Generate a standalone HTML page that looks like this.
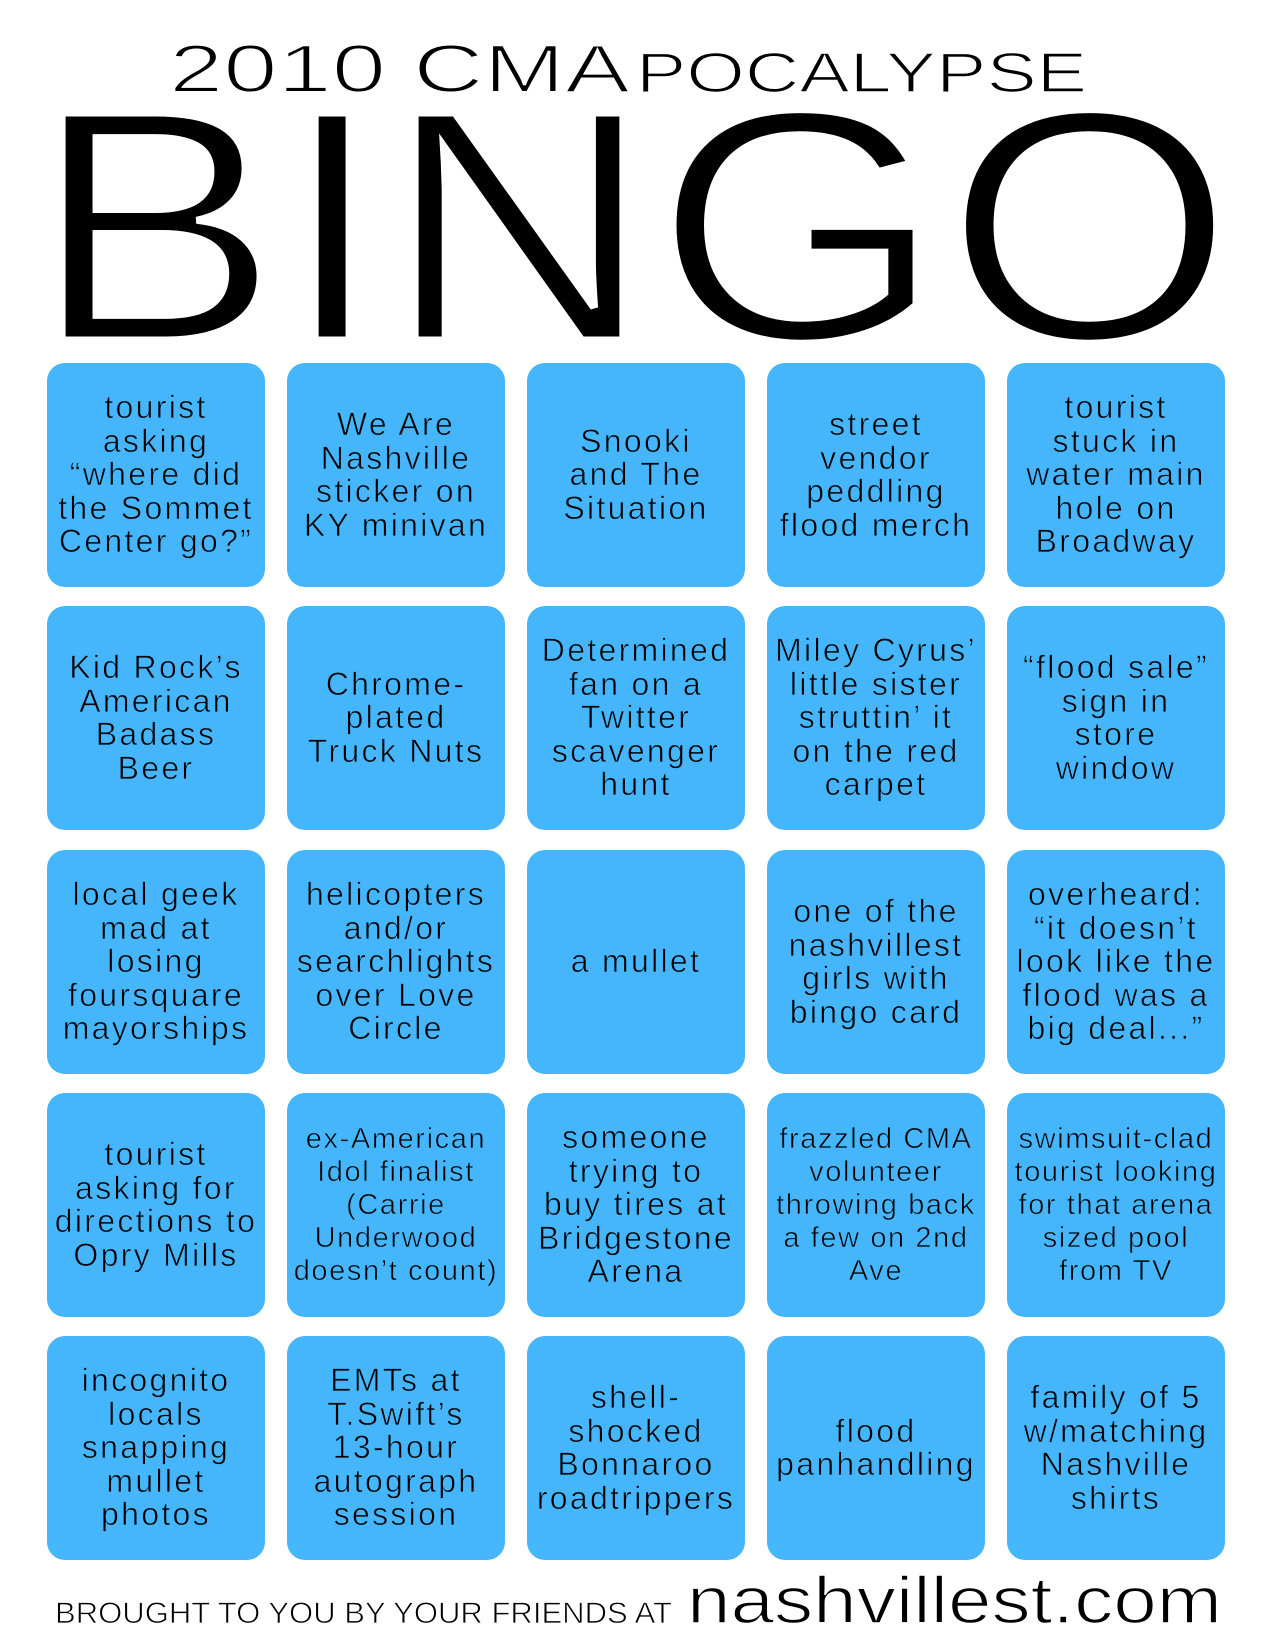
<!DOCTYPE html>
<html><head><meta charset="utf-8"><style>
body{margin:0;width:1275px;height:1650px;background:#fff;position:relative;overflow:hidden;font-family:"Liberation Sans",Arial,sans-serif;}
svg{position:absolute;left:0;top:0}
.c{position:absolute;width:218px;height:224px;background:#45b5fc;border-radius:18px;display:flex;align-items:center;justify-content:center;text-align:center;color:#000;font-size:32px;letter-spacing:2.3px;line-height:33.5px;white-space:nowrap;-webkit-text-stroke:0.7px #45b5fc}
.s{font-size:29px;letter-spacing:1.6px;line-height:33px}
</style></head><body>
<svg width="1275" height="1650">
<g font-family="Liberation Sans" stroke="#fff">
<text x="169" y="92" font-size="68" stroke-width="2" textLength="461" lengthAdjust="spacingAndGlyphs">2010 CMA</text>
<text x="636" y="92" font-size="57" stroke-width="1.6" textLength="451" lengthAdjust="spacingAndGlyphs">POCALYPSE</text>
<text x="31" y="340" font-size="330" stroke-width="7" textLength="1204" lengthAdjust="spacingAndGlyphs">BINGO</text>
<text x="55" y="1623" font-size="30" stroke-width="0.8" textLength="617" lengthAdjust="spacingAndGlyphs">BROUGHT TO YOU BY YOUR FRIENDS AT</text>
<text x="687" y="1623" font-size="66" stroke-width="1.5" textLength="535" lengthAdjust="spacingAndGlyphs">nashvillest.com</text>
</g>
</svg>

<div class="c" style="left:47px;top:363px">tourist<br>asking<br>“where did<br>the Sommet<br>Center go?”</div>
<div class="c" style="left:287px;top:363px">We Are<br>Nashville<br>sticker on<br>KY minivan</div>
<div class="c" style="left:527px;top:363px">Snooki<br>and The<br>Situation</div>
<div class="c" style="left:767px;top:363px">street<br>vendor<br>peddling<br>flood merch</div>
<div class="c" style="left:1007px;top:363px">tourist<br>stuck in<br>water main<br>hole on<br>Broadway</div>

<div class="c" style="left:47px;top:606px">Kid Rock’s<br>American<br>Badass<br>Beer</div>
<div class="c" style="left:287px;top:606px">Chrome-<br>plated<br>Truck Nuts</div>
<div class="c" style="left:527px;top:606px">Determined<br>fan on a<br>Twitter<br>scavenger<br>hunt</div>
<div class="c" style="left:767px;top:606px">Miley Cyrus’<br>little sister<br>struttin’ it<br>on the red<br>carpet</div>
<div class="c" style="left:1007px;top:606px">“flood sale”<br>sign in<br>store<br>window</div>

<div class="c" style="left:47px;top:850px">local geek<br>mad at<br>losing<br>foursquare<br>mayorships</div>
<div class="c" style="left:287px;top:850px">helicopters<br>and/or<br>searchlights<br>over Love<br>Circle</div>
<div class="c" style="left:527px;top:850px">a mullet</div>
<div class="c" style="left:767px;top:850px">one of the<br>nashvillest<br>girls with<br>bingo card</div>
<div class="c" style="left:1007px;top:850px">overheard:<br>“it doesn’t<br>look like the<br>flood was a<br>big deal...”</div>

<div class="c" style="left:47px;top:1093px">tourist<br>asking for<br>directions to<br>Opry Mills</div>
<div class="c s" style="left:287px;top:1093px">ex-American<br>Idol finalist<br>(Carrie<br>Underwood<br>doesn’t count)</div>
<div class="c" style="left:527px;top:1093px">someone<br>trying to<br>buy tires at<br>Bridgestone<br>Arena</div>
<div class="c s" style="left:767px;top:1093px">frazzled CMA<br>volunteer<br>throwing back<br>a few on 2nd<br>Ave</div>
<div class="c s" style="left:1007px;top:1093px">swimsuit-clad<br>tourist looking<br>for that arena<br>sized pool<br>from TV</div>

<div class="c" style="left:47px;top:1336px">incognito<br>locals<br>snapping<br>mullet<br>photos</div>
<div class="c" style="left:287px;top:1336px">EMTs at<br>T.Swift’s<br>13-hour<br>autograph<br>session</div>
<div class="c" style="left:527px;top:1336px">shell-<br>shocked<br>Bonnaroo<br>roadtrippers</div>
<div class="c" style="left:767px;top:1336px">flood<br>panhandling</div>
<div class="c" style="left:1007px;top:1336px">family of 5<br>w/matching<br>Nashville<br>shirts</div>
</body></html>
